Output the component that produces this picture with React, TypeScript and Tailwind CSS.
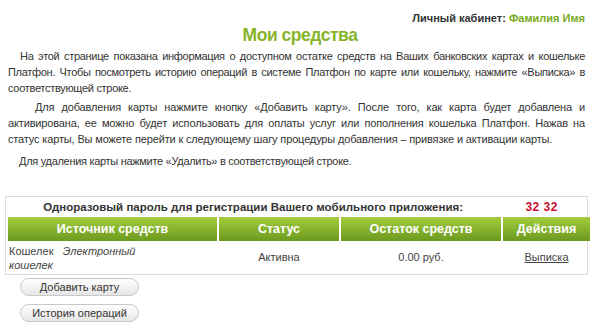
export default function App() {
  const body = { fontFamily: '"Liberation Sans", Arial, sans-serif' };
  return (
    <main className="w-[600px] h-[333px] bg-white text-[#333] text-[11px] leading-[16px] overflow-hidden" style={body}>
      <div className="flex justify-end pt-[11px] pr-[15px] font-bold text-[11px] leading-[14px] text-[#333]">
        Личный кабинет:&nbsp;<span className="text-[#7aab1e]">Фамилия Имя</span>
      </div>
      <h1 className="text-center text-[19px] leading-[20px] font-bold text-[#86b42a] tracking-[-0.5px] scale-x-[0.92]">Мои средства</h1>

      <div className="pl-[8px] pr-[15px] mt-[3px] text-justify">
        <p className="indent-[12px] tracking-[-0.3px]">
          На этой странице показана информация о доступном остатке средств на Ваших банковских картах и кошельке
          Платфон. Чтобы посмотреть историю операций в системе Платфон по карте или кошельку, нажмите «Выписка» в
          соответствующей строке.
        </p>
        <p className="indent-[27px] mt-[3px] tracking-[-0.15px]">
          Для добавления карты нажмите кнопку «Добавить карту». После того, как карта будет добавлена и
          активирована, ее можно будет использовать для оплаты услуг или пополнения кошелька Платфон. Нажав на
          статус карты, Вы можете перейти к следующему шагу процедуры добавления – привязке и активации карты.
        </p>
        <p className="indent-[11px] mt-[6px] tracking-[-0.3px]">Для удаления карты нажмите «Удалить» в соответствующей строке.</p>
      </div>

      <div className="mx-[5px] mt-[27px] w-[583px] border border-[#dcdcdc] px-[2px] pb-[1px]">
        <div className="flex h-[20px] items-center font-bold text-[11.5px]">
          <div className="w-[492px] text-center">Одноразовый пароль для регистрации Вашего мобильного приложения:</div>
          <div className="w-[87px] text-center text-[#c8102e] text-[12px] tracking-[0.5px]">32 32</div>
        </div>
        <div className="grid grid-cols-[209px_120px_160px_87px] gap-[2px] h-[24px] text-white font-bold text-[12.5px]">
          {['Источник средств', 'Статус', 'Остаток средств', 'Действия'].map((h) => (
            <div key={h} className="flex items-center justify-center bg-gradient-to-b from-[#a3cd3e] to-[#6c9a1e]">{h}</div>
          ))}
        </div>
        <div className="grid grid-cols-[209px_120px_160px_87px] gap-[2px] h-[32px] text-[11px] leading-[14px] text-[#444]">
          <div className="pt-[3px] pl-[1px]">
            Кошелек&nbsp;&nbsp;&nbsp;<i>Электронный<br />кошелек</i>
          </div>
          <div className="flex items-center justify-center">Активна</div>
          <div className="flex items-center justify-center">0.00 руб.</div>
          <div className="flex items-center justify-center underline">Выписка</div>
        </div>
      </div>

      <div className="flex flex-col gap-[8px] ml-[20px] mt-[3px]">
        {['Добавить карту', 'История операций'].map((b) => (
          <button key={b} className="w-[119px] h-[18px] rounded-full border border-[#c8c8c8] bg-gradient-to-b from-white to-[#e6e6e6] text-[11px] leading-[16px] text-[#333]">
            {b}
          </button>
        ))}
      </div>
    </main>
  );
}
